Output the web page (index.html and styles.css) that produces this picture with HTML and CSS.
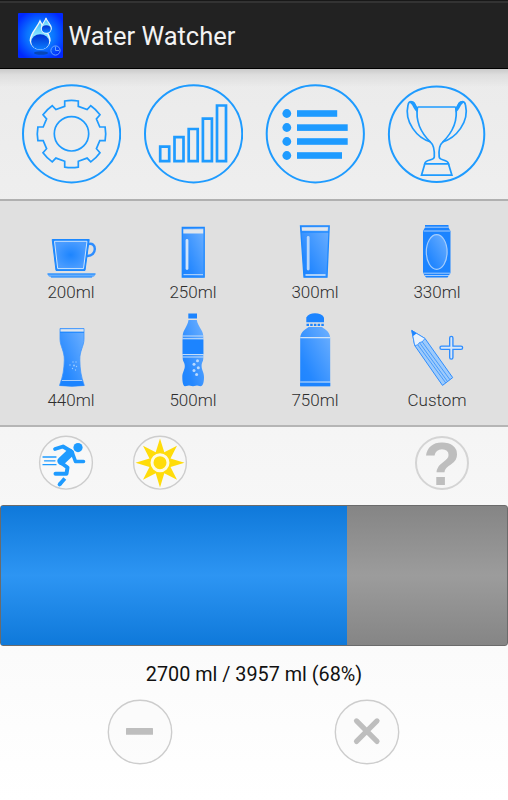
FILE: index.html
```html
<!DOCTYPE html>
<html lang="en">
<head>
  <meta charset="UTF-8" />
  <meta name="viewport" content="width=device-width, initial-scale=1.0"/>
  <title>Water Watcher</title>
  <link rel="stylesheet" href="styles.css">
</head>
<body>
  <header class="header">
    <svg class="logo" viewBox="0 0 45 45">
      <defs>
        <radialGradient id="logoBg" r="0.6">
          <stop offset="0" stop-color="#12a8ff"/>
          <stop offset="0.5" stop-color="#0a74ff"/>
          <stop offset="1" stop-color="#0128ff"/>
        </radialGradient>
        <linearGradient id="drop" x1="0" y1="0" x2="0" y2="1">
          <stop offset="0" stop-color="#35b8ff"/>
          <stop offset="0.5" stop-color="#8be6ff"/>
        </linearGradient>
        <linearGradient id="dropWater" x1="0" y1="0" x2="0" y2="1">
          <stop offset="0" stop-color="#0030d0"/>
          <stop offset="1" stop-color="#0a7cff"/>
        </linearGradient>
      </defs>
      <rect width="45" height="45" rx="1" fill="url(#logoBg)"/>
      <ellipse cx="23" cy="40" rx="7" ry="1.800" fill="#0646b8"/>
      <path d="M22 8C19 15 12.300 20 12.300 27.500A9.900 9.600 0 0 0 32 27.500C32 20 25 15 22 8Z" fill="url(#drop)" stroke="#eef4fa" stroke-width="1.400"/>
      <ellipse cx="22.200" cy="28.800" rx="9" ry="7.600" fill="url(#dropWater)"/>
      <path d="M28 5C27 9 23.300 11 23.300 15.300A5 5 0 0 0 33.300 15.300C33.300 11 29 9 28 5Z" fill="url(#drop)" stroke="#eef4fa" stroke-width="1.100"/>
      <ellipse cx="28.300" cy="16" rx="4.400" ry="3.700" fill="url(#dropWater)"/>
      <g fill="none" stroke="#6aa4ff">
        <circle cx="37.500" cy="37.500" r="4.600"/>
        <path d="M37.500 33.500V37.500H41"/>
      </g>
    </svg>
    <h1>Water Watcher</h1>
  </header>

  <nav class="menu">
    <svg class="menu-icon" viewBox="0 0 100 100">
      <circle cx="50.600" cy="49.800" r="48.600"/>
      <g class="thin" transform="translate(50.500 49.800)">
        <circle r="17.200"/>
        <path d="M-6.800-32.800Q0-34 6.800-32.800V-27.500L15.600-24.300L19.300-28.100Q24.500-24.500 28.500-19L24.900-14.900L28.300-6.800H33.600Q34.800 0 33.600 6.800H28.300L24.900 14.900L28.500 19Q24.500 24.500 19.300 28.100L15.600 24.300L6.800 27.500V33.300Q0 34.500-6.800 33.300V27.500L-15.600 24.300L-19.300 28.100Q-24.500 24.500-28.500 19L-24.900 14.900L-28.300 6.800H-33.600Q-34.800 0-33.600-6.800H-28.300L-24.900-14.900L-28.500-19Q-24.500-24.500-19.300-28.100L-15.600-24.300L-6.800-27.500Z"/>
      </g>
    </svg>
    <svg class="menu-icon" viewBox="0 0 100 100">
      <circle cx="50.600" cy="49.800" r="48.600"/>
      <path class="bars" d="M17.200 62.700h9v14.400h-9zM31.500 53.100h9v24h-9zM45.700 45h9v32.100h-9zM59.900 34.600h9v42.500h-9zM74 21.500h9v55.600h-9z"/>
    </svg>
    <svg class="menu-icon" viewBox="0 0 100 100">
      <circle cx="50.300" cy="49.800" r="48.600"/>
      <g class="solid">
        <circle cx="21.800" cy="29.500" r="4.400"/>
        <circle cx="21.800" cy="43.500" r="4.400"/>
        <circle cx="21.800" cy="57.500" r="4.400"/>
        <circle cx="21.800" cy="71.500" r="4.400"/>
        <rect x="32" y="26.200" width="40.200" height="6.600"/>
        <rect x="32" y="40.300" width="50.700" height="6.600"/>
        <rect x="32" y="54.200" width="50.700" height="6.600"/>
        <rect x="32" y="68.200" width="45" height="6.600"/>
      </g>
    </svg>
    <svg class="menu-icon" viewBox="0 0 100 100">
      <circle cx="49.600" cy="50.200" r="47.700"/>
      <g class="thin">
        <path d="M30.500 23H68.700"/>
        <path d="M30.500 23C28 39 35 50 43.700 58.300C47 61 47.600 66 47.300 73C47 77 38.500 75 37.700 79.800H61.600C60.500 75 52.500 77 52.200 73C51.600 66 52 61 55.500 58.300C64 50 71.500 39 68.700 23"/>
        <path d="M43.700 58C30 54 17 38 21 21C22 16 26 17 27.500 20L30.300 26"/>
        <path d="M55.500 58C69 54 82.500 38 78.500 21C77.500 16 73.500 17 72 20L69 26"/>
        <path d="M37.700 80.300L34.500 91.200H64.900L61.600 80.300"/>
      </g>
      <path class="solid" d="M22 18.500C24 16.500 27.500 17 28.500 20L30.800 24V28.500C26.500 26.500 26 19.500 22 18.500ZM77.300 18.500C75.300 16.500 71.800 17 70.800 20L68.500 24V28.500C72.800 26.500 73.300 19.500 77.300 18.500Z"/>
    </svg>
  </nav>

  <main class="drinks">
    <svg class="defs">
      <defs>
        <linearGradient id="water" x1="1" y1="0" x2="0" y2="1">
          <stop offset="0" stop-color="#6fb1ff"/>
          <stop offset="0.75" stop-color="#2588ff"/>
          <stop offset="1" stop-color="#1c84ff"/>
        </linearGradient>
        <radialGradient id="tea">
          <stop offset="0" stop-color="#1d85ff"/>
          <stop offset="1" stop-color="#4a9cff"/>
        </radialGradient>
      </defs>
    </svg>
    <div class="drink">
      <svg viewBox="0 0 80 76">
        <path d="M57 40.200C66 37 66.500 52.500 56 52" fill="none" stroke="#2d8dff" stroke-width="2.400"/>
        <path d="M21.200 35.500H58.200L54 66.500H25Z" fill="#1c88ff" stroke="#1c88ff"/>
        <path d="M23.500 37.300H56L52.500 64.600H26.700Z" fill="url(#tea)" stroke="#cfe4fb"/>
        <path d="M16.500 69.500H64.500Q64 73.300 60.500 73.300H20.500Q17 73.300 16.500 69.500Z" fill="#68aefb"/>
        <path d="M16.500 70H64.500M20 73H61" stroke="#1c88ff"/>
      </svg>
      <span>200ml</span>
    </div>
    <div class="drink">
      <svg viewBox="0 0 80 76">
        <path d="M29.300 23.500H51.200V73.200H29.300Z" fill="url(#water)" stroke="#1c88ff" stroke-width="1.300"/>
        <path d="M30.300 25.200H50.200V29.500H30.300Z" fill="#e0e6ed"/>
        <path d="M34 36.500V64.500" stroke="#cfe4fb" stroke-width="2.800" stroke-linecap="round"/>
        <path d="M30.500 70.600H50" stroke="#a5cdfc" stroke-width="1.200"/>
      </svg>
      <span>250ml</span>
    </div>
    <div class="drink">
      <svg viewBox="0 0 80 76">
        <path d="M25.500 22H54.200L52 73.200H29Z" fill="url(#water)" stroke="#1c88ff" stroke-width="1.300"/>
        <path d="M26.800 23.200H53L52.700 26.800H27Z" fill="#e0e6ed"/>
        <path d="M26 28H54" stroke="#1c88ff" stroke-width="1.300"/>
        <path d="M33.200 33.500V65" stroke="#b5d6fc" stroke-width="2.800" stroke-linecap="round"/>
        <path d="M30.500 71H50.500" stroke="#d6e8fb" stroke-width="1.500"/>
      </svg>
      <span>300ml</span>
    </div>
    <div class="drink">
      <svg viewBox="0 0 80 76">
        <path d="M28 21H51.500V23.500L53.500 27V69L50.500 73.500H29L26 69V27L28 23.500Z" fill="#1c84ff"/>
        <path d="M28 23.200H51.500M26.500 27H53M26 69.200H53.500M28 71.500H52" stroke="#a5cdfc"/>
        <ellipse cx="39.700" cy="48" rx="10.400" ry="17.300" fill="url(#water)" stroke="#a5cdfc" stroke-width="1.200"/>
      </svg>
      <span>330ml</span>
    </div>
    <div class="drink">
      <svg viewBox="0 0 80 76">
        <path d="M29 16.500H53V27C53 34 48.500 39 48.800 48C49 58 50 64 53.300 73.500Q41 75 28.500 73.500C32 64 33 58 33.300 48C33.500 39 29 34 29 27Z" fill="url(#water)" stroke="#3b94ff" stroke-width="0.800"/>
        <path d="M29.500 17.200H52.600V19.700H29.500Z" fill="#e0e6ed"/>
        <path d="M29 20.300H53" stroke="#1c88ff"/>
        <path d="M31 69H51.200L53 73.500Q41 75 29 73.500Z" fill="#1c84ff"/>
        <path d="M31 68.500H51" stroke="#a5cdfc"/>
        <g fill="#9ccafe"><circle cx="39" cy="53" r="0.700"/><circle cx="42" cy="50" r="0.700"/><circle cx="45" cy="50" r="0.700"/><circle cx="43" cy="53.500" r="0.900"/><circle cx="45.500" cy="54.500" r="0.700"/><circle cx="41.500" cy="56.500" r="0.700"/><circle cx="44.500" cy="58" r="0.700"/></g>
      </svg>
      <span>440ml</span>
    </div>
    <div class="drink">
      <svg viewBox="0 0 80 76">
        <path d="M35.300 1.500H44V6.500H35.300Z" fill="#1c84ff"/>
        <path d="M35.500 8H43.800C45 15 50.300 18 50.300 24V46C50.300 50 48.600 50 48.600 54C48.600 58 51 60 51 65C51 69 50.500 74 47.500 74.300L44 73.600L40 74.300L36 73.600L32 74.300C29.800 74 29.300 69 29.300 65C29.300 60 31.800 58 31.800 54C31.800 50 29.700 50 29.700 46V24C29.700 18 34.500 15 35.500 8Z" fill="url(#water)"/>
        <path d="M29.700 27.500H50.300V42H29.700Z" fill="#1c84ff"/>
        <path d="M29.500 24H50.500M29.500 26.700H50.500M29.500 42.500H50.500M29.500 45H50.500" stroke="#c3dcf8"/>
        <g fill="#b9d9ff"><circle cx="44.500" cy="48.700" r="1.500"/><circle cx="41" cy="52.200" r="1.500"/><circle cx="45.300" cy="55.700" r="1.500"/><circle cx="41" cy="58.500" r="1.500"/><circle cx="43.600" cy="62.500" r="1.500"/></g>
      </svg>
      <span>500ml</span>
    </div>
    <div class="drink">
      <svg viewBox="0 0 80 76">
        <path d="M31.300 10.300V5.500C33 2.500 36 1.300 40 1.300S47.500 2.500 49 5.500V10.300Z" fill="#1c84ff"/>
        <path d="M31.500 12.800H49" stroke="#1c84ff" stroke-width="2.200" stroke-dasharray="2.500 1.200"/>
        <path d="M33.500 15H47C50 17.500 54.500 19 55.200 25.400V74.200H25.200V25.400C26 19 30.500 17.500 33.500 15Z" fill="url(#water)"/>
        <path d="M25.200 71H55.200V74.200H25.200Z" fill="#1c84ff"/>
        <path d="M25.200 25.700H55.200M25.200 70H55.200" stroke="#d0e3f7" stroke-width="1.200"/>
      </svg>
      <span>750ml</span>
    </div>
    <div class="drink">
      <svg viewBox="0 0 80 76">
        <path d="M14.800 18.500L28 26.500L55.700 65.600L45.500 73.400L17.700 33.500Z" fill="#9dcafb" stroke="#2d8dff"/>
        <path d="M14.800 18.500L28 26.500L25 30L22.500 30.500L20.500 33L17.700 33.500Z" fill="#eaf2fb" stroke="#2d8dff" stroke-width="0.800"/>
        <path d="M14.500 18L19.500 21.500L15.800 24.300Z" fill="#1c84ff"/>
        <path d="M20.800 32.800L48.800 71M22.600 30.800L50.500 69.500M25 29.500L53 67.800" stroke="#3d95fb" stroke-width="0.900"/>
        <path d="M54.300 26V45.500M44.600 35.700H64" stroke="#2d8dff" stroke-width="4.600" stroke-linecap="round"/>
        <path d="M54.300 26V45.500M44.600 35.700H64" stroke="#d9e7f7" stroke-width="1.900" stroke-linecap="round"/>
      </svg>
      <span>Custom</span>
    </div>
  </main>

  <section class="modifiers">
    <svg class="small-icon" viewBox="0 0 56 56">
      <circle class="ring" cx="28" cy="27.700" r="26.400"/>
      <circle cx="40" cy="12.600" r="4.600" fill="#1e9bff"/>
      <g fill="none" stroke="#1e9bff" stroke-linecap="round" stroke-linejoin="round">
        <path d="M17 14L25 11.500L32.500 16" stroke-width="3.800"/>
        <path d="M32 18L23.500 26" stroke-width="8"/>
        <path d="M34 17L37.500 26.500H45.500" stroke-width="3.600"/>
        <path d="M22 27L29.500 32.500L28.500 38.800H17.500" stroke-width="4"/>
        <path d="M26.800 43.500L21.500 49.500" stroke-width="3.800" stroke-linecap="butt"/>
        <path d="M22.500 48.500L21.500 49.500" stroke-width="3.800"/>
        <path d="M5 22H18M6.500 25.800H17M5 29.700H18" stroke-width="1.300"/>
      </g>
    </svg>
    <svg class="small-icon" viewBox="0 0 56 56">
      <circle class="ring" cx="28" cy="27.700" r="26.400"/>
      <path fill="#ffdc0a" d="M28 3.500L32.300 17.300L45 10.800L38.500 23.400L52.500 27.700L38.500 32L45 44.700L32.300 38.200L28 52.500L23.700 38.200L11 44.700L17.500 32L3.500 27.700L17.500 23.400L11 10.800L23.700 17.300Z"/>
      <circle cx="28" cy="27.700" r="8" fill="#ffdc0a" stroke="#fffbe0" stroke-width="3"/>
    </svg>
    <div class="help">?</div>
  </section>

  <div class="progress">
    <div class="progress-fill" style="width: 68.300%"></div>
  </div>

  <p class="total">2700 ml / 3957 ml (68%)</p>

  <div class="actions">
    <svg class="action-icon" viewBox="0 0 66 66">
      <circle class="ring" cx="33" cy="33" r="31.700"/>
      <rect x="19" y="29" width="27" height="6.800" rx="0.500" fill="#bebebe"/>
    </svg>
    <svg class="action-icon" viewBox="0 0 66 66">
      <circle class="ring" cx="33" cy="33" r="31.700"/>
      <path d="M22.500 21.900L43 42.400M43 21.900L22.500 42.400" stroke="#bebebe" stroke-width="5.200" stroke-linecap="round"/>
    </svg>
  </div>
</body>
</html>
```

FILE: styles.css
```css
* {
  box-sizing: border-box;
}
body {
  font-family: Roboto, sans-serif;
  background: linear-gradient(#e9e9e9, #fff);
  margin: 0;
  height: 800px;
  overflow: hidden;
}
svg {
  display: block;
}
.header {
  display: flex;
  align-items: center;
  gap: 6px;
  height: 69px;
  padding: 2px 17.5px 0;
  background: linear-gradient(#181818 1px, #333 1px, #333 3px, #222 3px);
  border-bottom: 1px solid #000;
}
.logo {
  width: 45px;
  height: 45px;
}
h1 {
  margin: 0;
  padding-top: 2px;
  color: #f3f3f3;
  font-size: 25.5px;
  font-weight: 400;
  line-height: 32px;
}
.menu {
  display: grid;
  grid-template-columns: repeat(4, 122px);
  justify-content: center;
  justify-items: center;
  height: 132px;
  padding-top: 15px;
  background: linear-gradient(#cacaca, #dedede 6px, rgba(235, 235, 235, 0) 18px);
  border-bottom: 2px solid #b0b0b0;
}
.menu-icon {
  width: 100px;
  height: 100px;
  fill: none;
  stroke: #1e9bff;
  stroke-width: 2;
}
.thin {
  stroke-width: 1.7;
}
.bars {
  stroke-width: 2.7;
}
.solid {
  fill: #1e9bff;
  stroke: none;
}
.drinks {
  display: grid;
  grid-template-columns: repeat(4, 122px);
  grid-auto-rows: 108px;
  justify-content: center;
  height: 226px;
  padding-top: 3px;
  background: #e0e0e0;
  border-bottom: 2px solid #b5b5b5;
}
.defs {
  position: absolute;
  width: 0;
  height: 0;
}
.drink {
  display: flex;
  flex-direction: column;
  align-items: center;
  color: #2e2e2e;
  font-size: 17px;
  font-weight: 300;
  line-height: 24px;
}
.drink svg {
  width: 80px;
  height: 76px;
  fill: none;
}
.modifiers {
  display: flex;
  gap: 38px;
  height: 78px;
  padding: 8px 38px 0;
}
.small-icon {
  width: 56px;
  height: 56px;
}
.ring {
  fill: #fafafa;
  fill-opacity: 0.5;
  stroke: #cdcdcd;
  stroke-width: 1.4;
}
.help {
  width: 54px;
  height: 54px;
  margin: 1px 1px 0 auto;
  border: 2px solid #d4d4d4;
  border-radius: 50%;
  color: #bebebe;
  font: bold 61px/52px "Liberation Sans", sans-serif;
  text-align: center;
}
.progress {
  height: 141px;
  border: 1px solid #6b6b6b;
  border-radius: 3px;
  background: linear-gradient(#858585, #9c9c9c 50%, #858585);
}
.progress-fill {
  height: 100%;
  background: linear-gradient(#0f79da, #2d95f3 50%, #0f79da);
}
.total {
  margin: 0;
  padding-top: 17px;
  color: #111;
  font-size: 19.8px;
  line-height: 24px;
  text-align: center;
}
.actions {
  display: flex;
  justify-content: space-between;
  padding: 12px 108px 0 107px;
}
.action-icon {
  width: 66px;
  height: 66px;
}
```
